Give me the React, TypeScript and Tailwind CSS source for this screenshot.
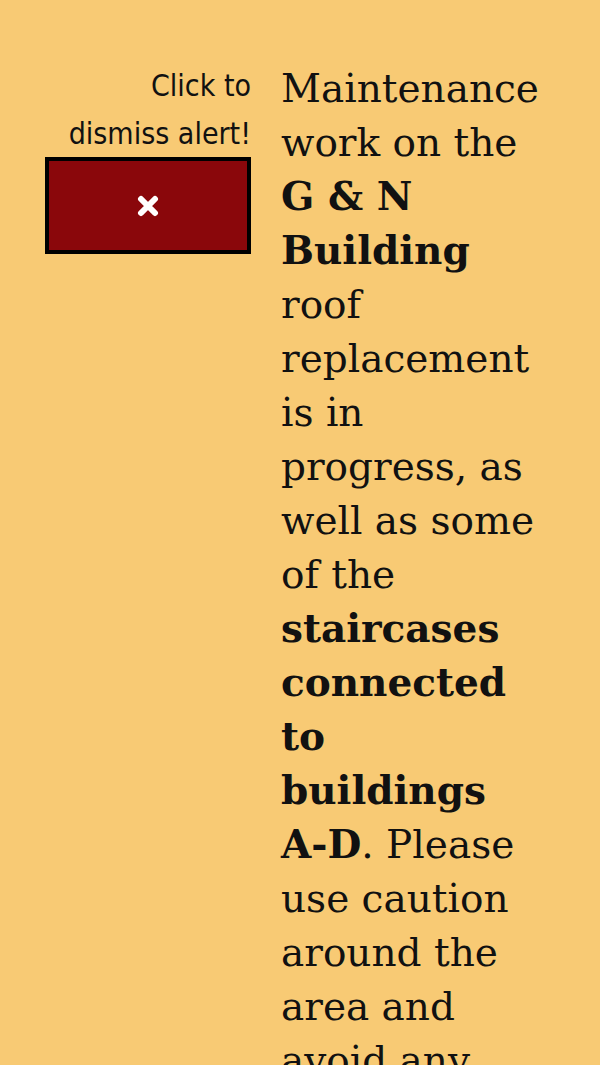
const CloseIcon = () => (
  <svg width="22" height="22" viewBox="0 0 22 22" fill="none" aria-hidden="true">
    <path d="M4 4 L18 18 M18 4 L4 18" stroke="white" strokeWidth="6" strokeLinecap="round" />
  </svg>
);

const App = () => {
  return (
    <div className="h-[1065px] w-[600px] overflow-hidden bg-[#f8ca74]">
      <div className="flex gap-[30px] pl-[45px] pt-[62px]">
        <div className="flex w-[206px] shrink-0 flex-col items-end">
          <p className="text-right font-['DejaVu_Sans_Condensed','DejaVu_Sans',sans-serif] text-[30px] leading-[48px] text-[#111]">
            Click to
            <br />
            dismiss alert!
          </p>
          <button
            type="button"
            className="mt-[-1px] flex h-[97px] w-[206px] items-center justify-center border-[4px] border-black bg-[#8a070b]"
          >
            <CloseIcon />
          </button>
        </div>
        <div className="w-[259px] font-['DejaVu_Serif',serif] text-[39px] leading-[54px] text-[#111]">
          Maintenance work on the <b className="leading-[40px]">G &amp; N Building</b> roof replacement is in progress,
          as well as some of the <b className="leading-[40px]">staircases connected to buildings</b>{" "}
          <span className="whitespace-nowrap">
            <b className="leading-[40px]">A-D</b>.
          </span>{" "}
          Please use caution around the area and avoid any construction zones.
        </div>
      </div>
    </div>
  );
};

export default App;
